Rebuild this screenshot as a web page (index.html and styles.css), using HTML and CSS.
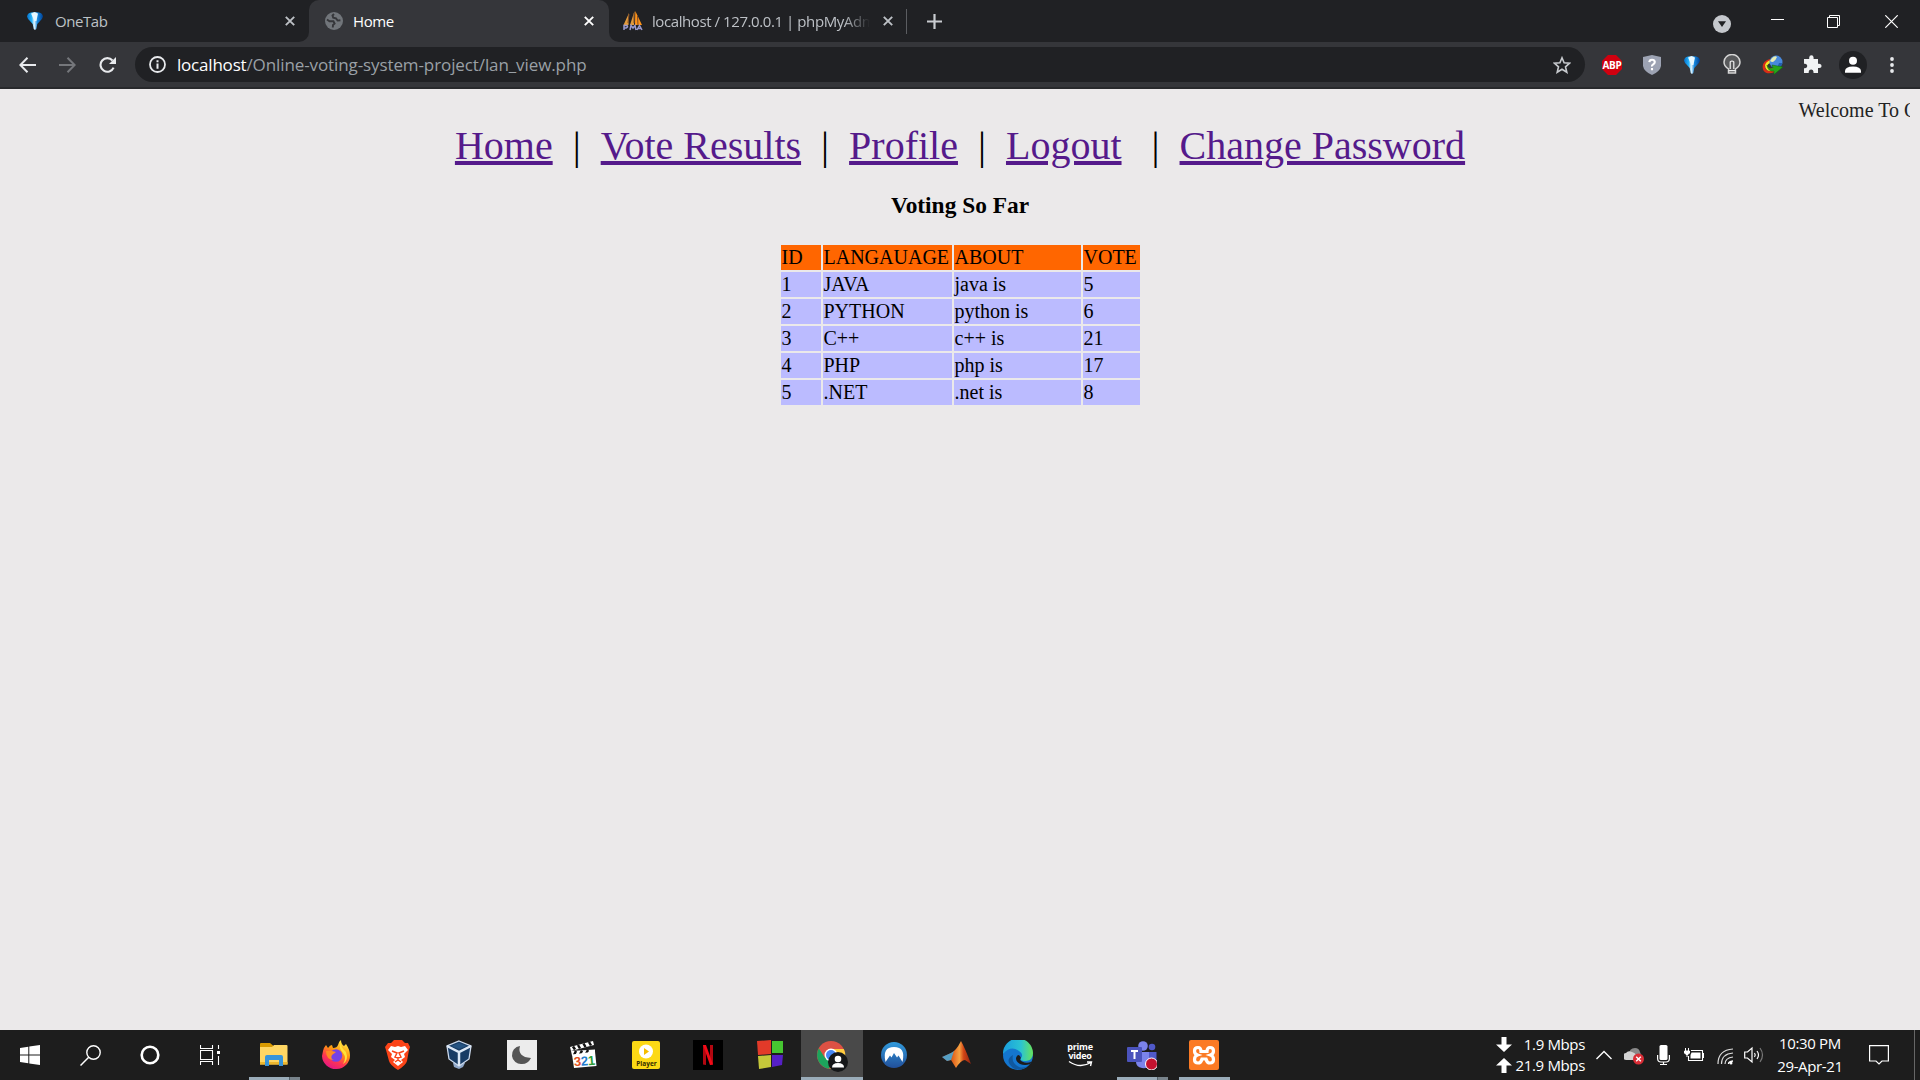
FILE: index.html
```html
<!DOCTYPE html>
<html lang="en">
<head>
<meta charset="utf-8">
<title>Home</title>
<link rel="stylesheet" href="styles.css">
</head>
<body>
<svg class="defs" width="0" height="0" aria-hidden="true">
  <defs>
    <linearGradient id="blue" x1="0" x2="1"><stop offset="0" stop-color="#056fc9"/><stop offset=".3" stop-color="#27b4fa"/><stop offset=".45" stop-color="#e8f8ff"/><stop offset=".65" stop-color="#1689df"/><stop offset="1" stop-color="#003e91"/></linearGradient>
    <linearGradient id="fox" x1="0.8" y1="0" x2="0.3" y2="1"><stop offset="0" stop-color="#fff44f"/><stop offset=".4" stop-color="#ff980e"/><stop offset=".7" stop-color="#ff3750"/><stop offset="1" stop-color="#e31587"/></linearGradient>
    <linearGradient id="edge" x1="0" x2="1"><stop offset="0" stop-color="#199ddf"/><stop offset=".6" stop-color="#2bc3d2"/><stop offset="1" stop-color="#67e35b"/></linearGradient>
    <linearGradient id="nord" x1="0" y1="0" x2="0" y2="1"><stop offset="0" stop-color="#329bdc"/><stop offset="1" stop-color="#214f9a"/></linearGradient>
    <linearGradient id="matlab" x1="0" x2="1"><stop offset="0" stop-color="#6b1612"/><stop offset=".4" stop-color="#e56a20"/><stop offset=".6" stop-color="#f5a142"/><stop offset=".75" stop-color="#d04415"/><stop offset="1" stop-color="#8c2412"/></linearGradient>
    <symbol id="onetab" viewBox="0 0 16 18"><path d="M0 4.5 Q.5 1 4 .4 Q8 -.3 12 .4 Q15.5 1 16 4.5 Q15.6 6.5 13.5 8.5 L10.3 12 L9.3 17 L8 18 L6.7 17 L5.7 12 L2.5 8.5 Q.4 6.5 0 4.5Z" fill="url(#blue)"/><path d="M4 1.5 Q8 .2 11 1.6 L9.4 9 L7.4 9Z" fill="#e8f8ff"/></symbol>
    <symbol id="close" viewBox="0 0 10 10"><path d="M.8.8 9.2 9.2M9.2.8.8 9.2" fill="none" stroke="currentColor" stroke-width="1.9"/></symbol>
  </defs>
</svg>

<header class="tabstrip">
  <div class="tab tab-first">
    <svg class="favicon onetab"><use href="#onetab"/></svg>
    <span class="tab-title title-one">OneTab</span>
    <svg class="tab-close"><use href="#close"/></svg>
  </div>
  <div class="tab tab-active">
    <svg class="favicon globe" viewBox="0 0 18 18"><circle cx="9" cy="9" r="9" fill="#71757a"/><path d="M2 7.5 4.5 9.2 8.4 9.3 9.6 11.6 8 13 7.8 15.5M9 2 7.5 3.6 8.2 5.6 11 6.4 12.6 8.6 15.4 8.2" fill="none" stroke="#35363a" stroke-width="1.9"/></svg>
    <span class="tab-title title-home">Home</span>
    <svg class="tab-close"><use href="#close"/></svg>
  </div>
  <div class="tab tab-last">
    <svg class="favicon pma" viewBox="0 0 20 20"><path d="M.5 14 6 2 5.5 14M7 14 11.5 0 11 14" fill="#e29a3b"/><path d="M12 14 12.3 0 19 14Z" fill="#ff9216"/><path d="M5 12 6 3M11 12V2M15 14 14.5 5" stroke="#7b4a28" stroke-width="1"/><path d="M1 19V14.5H4Q5.5 16 3 17H1M7 19 8 14.5 10 17 12 14.5 13 19M14 19 16.5 14.5 19 19M15 17.5H18" stroke="#9999cc" stroke-width="1.5" fill="none"/></svg>
    <span class="tab-title title-pma">localhost / 127.0.0.1 | phpMyAdmin</span>
    <svg class="tab-close"><use href="#close"/></svg>
  </div>
  <span class="tab-divider"></span>
  <svg class="new-tab" viewBox="0 0 15 15"><path d="M7.5 0V15M0 7.5H15" stroke="#c9ccd0" stroke-width="2.2"/></svg>
  <div class="window-controls">
    <svg class="search-tabs" viewBox="0 0 18 18"><circle cx="9" cy="9" r="9" fill="#c5c8cd"/><path d="M5 6.3H13L9 12Z" fill="#202124"/></svg>
    <svg class="win win-min" viewBox="0 0 13 13"><path d="M0 5.5H13" stroke="#fff"/></svg>
    <svg class="win" viewBox="0 0 13 13"><path d="M.5 2.5H10.5V12.5H.5ZM2.5 2.5V.5H12.5V10.5H10.5" fill="none" stroke="#fff"/></svg>
    <svg class="win" viewBox="0 0 13 13"><path d="M.3.3 12.7 12.7M12.7.3.3 12.7" stroke="#fff" stroke-width="1.2"/></svg>
  </div>
</header>

<div class="toolbar">
  <div class="nav-buttons">
    <svg viewBox="0 0 17 16"><path d="M17 8H1.5M8.5.8 1.3 8 8.5 15.2" fill="none" stroke="#e8eaed" stroke-width="2"/></svg>
    <svg viewBox="0 0 17 16"><path d="M0 8H15.5M8.5.8 15.7 8 8.5 15.2" fill="none" stroke="#75777b" stroke-width="2"/></svg>
    <svg viewBox="0 0 17 16"><path d="M14.6 10.6A6.8 6.8 0 1 1 13.5 3.5" fill="none" stroke="#e8eaed" stroke-width="2.1"/><path d="M17 0V7H10Z" fill="#e8eaed"/></svg>
  </div>
  <div class="omnibox">
    <svg class="info" viewBox="0 0 17 17"><circle cx="8.5" cy="8.5" r="7.5" fill="none" stroke="#e8eaed" stroke-width="1.8"/><path d="M8.5 7.5V12.8M8.5 4.2V6.2" stroke="#e8eaed" stroke-width="2"/></svg>
    <span class="url"><span class="host">localhost</span>/Online-voting-system-project/lan_view.php</span>
    <svg class="star" viewBox="0 0 18 18"><path d="M9 1.8 11.1 6.7 16.6 7.2 12.5 10.8 13.8 16.2 9 13.3 4.2 16.2 5.5 10.8 1.4 7.2 6.9 6.7Z" fill="none" stroke="#c7cace" stroke-width="1.6"/></svg>
  </div>
  <div class="extensions">
    <span class="ext"><svg width="20" height="20" viewBox="0 0 20 20"><path d="M6 0H14L20 6V14L14 20H6L0 14V6Z" fill="#d1000f"/><text x="10" y="13.7" class="abp">ABP</text></svg></span>
    <span class="ext"><svg width="18" height="20" viewBox="0 0 18 20"><path d="M9 0 18 2V11Q17 16.5 9 20 1 16.5 0 11V2Z" fill="#9da3b3"/><path d="M6.3 7.2Q6.5 4.7 9 4.7T11.8 7Q11.8 8.3 10.2 9.3T9 11.5M9 13V15.2" fill="none" stroke="#fff" stroke-width="2.1"/></svg></span>
    <span class="ext"><svg width="16" height="18"><use href="#onetab"/></svg></span>
    <span class="ext"><svg width="18" height="21" viewBox="0 0 18 21"><path d="M5.5 14.8Q1 12.5 1 8A8 7.5 0 0 1 17 8Q17 12.5 12.5 14.8V19H5.5Z" fill="#58595b" stroke="#d5d5d5" stroke-width="1.5"/><path d="M7.2 15V8Q9 6 10.8 8V15M5.5 16.7H12.5" fill="none" stroke="#eee" stroke-width="1.2"/></svg></span>
    <span class="ext"><svg width="21" height="20" viewBox="0 0 21 20"><path d="M9 5Q1 7 2 13T12 16" fill="none" stroke="#da2d16" stroke-width="2.5"/><path d="M10 6Q3 8 4.5 12T12 14" fill="none" stroke="#f4e829" stroke-width="2.5"/><circle cx="14" cy="7" r="6.5" fill="#4889dd"/><path d="M10 3Q13 0 15 2 14 5 11 7 9 7 8 6Z" fill="#e5edb5"/><path d="M17 8 20.5 8Q19 13 15 13.5Z" fill="#2461ae"/><path d="M5 10Q7 15 11 13L10 10 21 12 12 19.5 12 16Q6 17 5 10Z" fill="#27a51a" stroke="#12650f" stroke-width=".5"/></svg></span>
    <span class="ext"><svg width="19" height="19" viewBox="0 0 19 19"><path d="M1 4H6.2V2.6Q6.4.3 8.4.3T10.6 2.6V4H15V8.8H16.3Q18.6 9 18.6 11T16.3 13.1H15V18H10.5V16.8Q10.2 14.6 8.1 14.6T5.7 16.8V18H1V13.2H2.1Q4.3 13 4.3 11T2.1 8.8H1Z" fill="#f1f3f4"/></svg></span>
    <span class="ext"><svg width="28" height="28" viewBox="0 0 28 28"><circle cx="14" cy="14" r="14" fill="#202124"/><circle cx="14" cy="9.8" r="4" fill="#fff"/><path d="M6 21.8V20Q6.3 15.5 14 15.5T22 20V21.8Z" fill="#fff"/></svg></span>
    <span class="ext"><svg width="4" height="16" viewBox="0 0 4 16"><circle cx="2" cy="2" r="1.9" fill="#e8eaed"/><circle cx="2" cy="8" r="1.9" fill="#e8eaed"/><circle cx="2" cy="14" r="1.9" fill="#e8eaed"/></svg></span>
  </div>
</div>

<main class="page">
  <div class="marquee"><span>Welcome To Online Voting</span></div>
  <nav class="links"><a href="#">Home</a>&nbsp; | &nbsp;<a href="#">Vote Results</a>&nbsp; | &nbsp;<a href="#">Profile</a>&nbsp; | &nbsp;<a href="#">Logout</a>&nbsp;&nbsp; | &nbsp;<a href="#">Change Password</a></nav>
  <h3>Voting So Far</h3>
  <table class="votes">
    <colgroup><col class="c-id"><col class="c-lang"><col class="c-about"><col class="c-vote"></colgroup>
    <tr class="head"><td>ID</td><td>LANGAUAGE</td><td>ABOUT</td><td>VOTE</td></tr>
    <tr><td>1</td><td>JAVA</td><td>java is</td><td>5</td></tr>
    <tr><td>2</td><td>PYTHON</td><td>python is</td><td>6</td></tr>
    <tr><td>3</td><td>C++</td><td>c++ is</td><td>21</td></tr>
    <tr><td>4</td><td>PHP</td><td>php is</td><td>17</td></tr>
    <tr><td>5</td><td>.NET</td><td>.net is</td><td>8</td></tr>
  </table>
</main>

<footer class="taskbar">
  <div class="system">
    <span class="slot"><svg width="20" height="20" viewBox="0 0 20 20"><path d="M0 3 8.3 1.8V9.4H0ZM9.3 1.6 20 0V9.4H9.3ZM0 10.4H8.3V18.2L0 17ZM9.3 10.4H20V20L9.3 18.4Z" fill="#fff"/></svg></span>
    <span class="slot"><svg width="21" height="21" viewBox="0 0 21 21"><circle cx="13.5" cy="7.5" r="6.7" fill="none" stroke="#fff" stroke-width="1.4"/><path d="M8.7 12.3.5 20.5" stroke="#fff" stroke-width="1.5"/></svg></span>
    <span class="slot"><svg width="20" height="20" viewBox="0 0 20 20"><circle cx="10" cy="10" r="8.3" fill="none" stroke="#fff" stroke-width="2.6"/></svg></span>
    <span class="slot"><svg width="20" height="20" viewBox="0 0 20 20"><path d="M.5 0V3.5H12.5V0M.5 5.5H12.5V14.5H.5ZM.5 20V16.5H12.5V20M18.5 0V4M18.5 11V20" fill="none" stroke="#fff" stroke-width="1.1"/><path d="M17 6H20V9H17Z" fill="#fff"/></svg></span>
  </div>
  <div class="apps">
    <span class="app grouped"><svg viewBox="0 0 30 30"><path d="M1 5V3.5Q1 3 2 3H11L14 5.5V9H1Z" fill="#d99a00"/><path d="M1 7H13L15 5H27.5Q28.5 5 28.5 6V24.5H1Z" fill="#ffd663"/><path d="M1 22H28.5V24.5H1Z" fill="#edb62d"/><path d="M6 26V17Q6 15 8 15H22Q24 15 24 17V26H20V20H10V26Z" fill="#3794da"/></svg></span>
    <span class="app"><svg viewBox="0 0 30 30"><path d="M2 11Q3 7 5 5L7 8Q9 5 11 5L12 8Q16 8 17 5 18 1 20 0 20 4 23 6L25 4Q29 10 29 15A14 13.5 0 0 1 1 16Z" fill="url(#fox)"/><circle cx="15" cy="15.5" r="6.3" fill="#7542e5"/><path d="M5 11 11 11 15 12 11 15Q9 19 13 20 5 20 5 11Z" fill="#ff8b23"/><path d="M20 1Q19 7 25 12 28 20 22 24 26 18 22 13 17 8 20 1Z" fill="#ffe13a"/></svg></span>
    <span class="app"><svg viewBox="0 0 30 30"><path d="M8 3 11 0H19L22 3 25 3 27 7 26 10 24 21Q23 25 15 30 7 25 6 21L3 10 2 7 5 3Z" fill="#fb4418"/><path d="M8 6 12 7 15 6 18 7 22 6 25 10 21 14 22 17 18 20 20 22 15 26 10 22 12 20 8 17 9 14 5 10Z" fill="#fff"/><path d="M9 11 14 13 12 17 15 18 18 17 16 13 21 11M15 18V21M12 22 15 20 18 22" fill="none" stroke="#fb4418" stroke-width="1.5"/></svg></span>
    <span class="app vbox"><svg viewBox="0 0 30 30"><path d="M9 23H21L19 27 15 29 10 27Z" fill="#91a9ca"/><path d="M15 1 27 6 25 19 15 26 5 19 3 6Z" fill="#183c65" stroke="#cddbee" stroke-width="1.3"/><path d="M3 6 15 12 27 6M15 12V26" fill="none" stroke="#dce8f6" stroke-width="2.5"/><path d="M15 3 23 6 15 9 7 6Z" fill="#255381"/></svg></span>
    <span class="app"><svg viewBox="0 0 30 30"><path d="M0 0H30V30H0Z" fill="#ececec"/><path d="M13 6Q10 17 24 18 21 24 15 24A9 9 0 0 1 13 6Z" fill="#555"/></svg></span>
    <span class="app"><svg viewBox="0 0 30 30"><path d="M1 7 24 1 25 5 2 11Z" fill="#fff"/><path d="M2 11 26 9.5V13L3 15.5Z" fill="#fff"/><path d="M4 6.5 6 9.5M9 5 11 8.5M14.5 3.5 16.5 7M20 2 22 5.5M5 15 7 11M11 14.5 13 10.5M17 14 19 10" stroke="#111" stroke-width="2.5"/><path d="M3 14.5 26 11.5 27.5 26 5 28Z" fill="#fff"/><text x="5" y="25.5" class="n321" transform="rotate(-5 15 22)"><tspan fill="#e34f20">3</tspan><tspan fill="#247dce">2</tspan><tspan fill="#2d9d38">1</tspan></text></svg></span>
    <span class="app"><svg viewBox="0 0 30 30"><rect x="1" y="1" width="28" height="28" rx="2" fill="#fcd915"/><circle cx="15" cy="11.5" r="7" fill="#fff"/><path d="M13 8 18 11.5 13 15Z" fill="#f5bd00"/><text x="15.5" y="25.5" class="player">Player</text></svg></span>
    <span class="app"><svg viewBox="0 0 30 30"><path d="M0 0H30V30H0Z" fill="#000"/><path d="M10 5H13V25L10 24.5ZM17 5H20V24.5L17 25Z" fill="#b20710"/><path d="M10 5H13L20 24.5 17 25Z" fill="#f20b18"/></svg></span>
    <span class="app"><svg viewBox="0 0 30 30"><path d="M2 1 16 0V14L3 15Z" fill="#e23a29"/><path d="M17 1H28V13H17Z" fill="#46c631"/><path d="M3 16 16 15V27L4 29Z" fill="#c5c83a"/><path d="M17 15H28L27 25 17 27Z" fill="#5620c6"/></svg></span>
    <span class="app active"><svg viewBox="0 0 34 34"><circle cx="15" cy="17" r="14" fill="#dd5144"/><path d="M2.8 10.2A14 14 0 0 0 13 30.8L18 20H9Z" fill="#1ca45c"/><path d="M15 11H27.8A14 14 0 0 1 14 31L20 20Z" fill="#ffcd40"/><circle cx="15" cy="17" r="6.5" fill="#fff"/><circle cx="15" cy="17" r="5" fill="#4687f4"/><circle cx="22" cy="24" r="10" fill="#151719"/><circle cx="22" cy="21" r="3.3" fill="#fff"/><path d="M16 29.5Q16 25 22 25T28 29.5Z" fill="#fff"/></svg></span>
    <span class="app"><svg viewBox="0 0 30 30"><circle cx="15" cy="15" r="13" fill="url(#nord)"/><path d="M6.5 22Q3 7 15 7T23.5 22L19.5 15.5 18 17.5 15 13 12.5 17.5 11 15.5Z" fill="#fff"/></svg></span>
    <span class="app"><svg viewBox="0 0 30 30"><path d="M1 17 10 13Q15 11 20 1 24 8 30 24L24 20Q20 20 15 28L10 20 6 21Z" fill="url(#matlab)"/><path d="M1 17 10 13 13 11 10 20 6 21Z" fill="#559fc3"/></svg></span>
    <span class="app"><svg viewBox="0 0 30 30"><circle cx="15" cy="15" r="15" fill="#1476cf"/><path d="M0 14A15 15 0 0 1 30 13Q30 20 23 21 16 21 18 18 21 14 16 11 8 5 0 14Z" fill="url(#edge)"/><path d="M10 15Q8 23 16 27 22 29 27 24 18 33 10 28 1 20 10 15Z" fill="#10589f"/><path d="M18 18Q16 20 19 21.5 24 24 28.5 21.5L27 24Q22 26 17 24 11 20 14 16 16 13 18 18Z" fill="#1c1c1c"/></svg></span>
    <span class="app"><svg viewBox="0 0 30 30"><text x="15" y="9.5" class="prime">prime</text><text x="15" y="19" class="prime">video</text><path d="M4 21.5Q15 29 26 22.5M22 22H26.5L25.5 26" fill="none" stroke="#fff" stroke-width="1.4"/></svg></span>
    <span class="app grouped"><svg viewBox="0 0 30 30"><circle cx="16" cy="6" r="4.8" fill="#7b83eb"/><circle cx="25" cy="7" r="3.3" fill="#5059c9"/><path d="M9 12H23V24Q21 29 15 28T9 22Z" fill="#7b83eb"/><path d="M22 12H29.5V21Q27 25 22 24Z" fill="#5059c9"/><rect y="7" width="15" height="15" rx="1" fill="#4b53bc"/><path d="M4 11H11M7.5 11V19" stroke="#fff" stroke-width="2"/><circle cx="24.5" cy="24" r="6" fill="#c4122f" stroke="#fff"/></svg></span>
    <span class="app running"><svg viewBox="0 0 30 30"><rect width="30" height="30" rx="2" fill="#fb7a24"/><path d="M9 7.5Q5.5 7.5 5.5 11 5.5 14 8.5 15 5.5 16 5.5 19.5 5.5 23 9 23 12 23 13 19H17Q18 23 21 23 24.5 23 24.5 19.5 24.5 16 21.5 15 24.5 14 24.5 11 24.5 7.5 21 7.5 18 7.5 18 11.5H12Q12 7.5 9 7.5Z" fill="none" stroke="#fff" stroke-width="3.2"/></svg></span>
  </div>
  <div class="tray">
    <div class="net">
      <div class="rate"><svg viewBox="0 0 16 16"><path d="M5.5 0H10.5V7.5H16L8 15 0 7.5H5.5Z" fill="#fff"/></svg><span>1.9 Mbps</span></div>
      <div class="rate"><svg viewBox="0 0 16 16"><path d="M5.5 15H10.5V7.5H16L8 0 0 7.5H5.5Z" fill="#fff"/></svg><span>21.9 Mbps</span></div>
    </div>
    <svg class="chevron" viewBox="0 0 16 10"><path d="M.5 9 8 1.5 15.5 9" fill="none" stroke="#fff" stroke-width="1.4"/></svg>
    <svg class="cloud" viewBox="0 0 20 18"><path d="M5 8Q5 1 11 1 15 1 16 5L18 10 8 12Z" fill="#898989"/><path d="M3 13A3.5 3.5 0 0 1 2 6Q4 3 8 5 12 6 12 9L10 13Z" fill="#d3d3d3"/><circle cx="14.5" cy="12" r="5.5" fill="#d92d36"/><path d="M12.2 9.7 16.8 14.3M16.8 9.7 12.2 14.3" stroke="#fff" stroke-width="1.4"/></svg>
    <svg class="mic" viewBox="0 0 13 20"><rect x="2.5" width="8" height="15" rx="1.5" fill="#fff"/><path d="M.6 10V13.5Q.6 17 4 17H9Q12.4 17 12.4 13.5V10M6.5 17V20M3 19.5H10" fill="none" stroke="#fff" stroke-width="1.2"/></svg>
    <svg class="battery" viewBox="0 0 20 14"><path d="M7 2.5H18.5V12.5H4.5V8M18.5 5.5H19.5V9.5H18.5" fill="none" stroke="#fff" stroke-width="1.1"/><path d="M7.5 4.5H16.5V10.5H6.5V7Z" fill="#fff"/><path d="M1.5 0V3M4.5 0V3M.5 3H5.5V5L4 6.5H2L.5 5ZM3 7V9" fill="#fff" stroke="#fff"/></svg>
    <svg class="wifi" viewBox="0 0 17 17"><path d="M1 16Q1 2 16 1M4.5 16Q4.5 6 16 5M8 16Q8 10 16 9" fill="none" stroke="#ddd" stroke-width="1.2"/><path d="M11.5 16Q11.5 13.5 16 13" fill="none" stroke="#fff" stroke-width="1.4"/><circle cx="14" cy="15" r="1.5" fill="#fff"/></svg>
    <svg class="volume" viewBox="0 0 21 18"><path d="M.7 6H3.5L8 2V16L3.5 12H.7Z" fill="none" stroke="#fff" stroke-width="1.2"/><path d="M10.5 7Q12 9 10.5 11M13 5Q16 9 13 13" fill="none" stroke="#fff" stroke-width="1.2"/><path d="M16 2Q21 9 16 16" fill="none" stroke="#777" stroke-width="1.2"/></svg>
    <div class="clock"><span>10:30 PM</span><span>29-Apr-21</span></div>
    <svg class="notice" viewBox="0 0 20 20"><path d="M.6.6H19.4V16H13L10 19 7 16H.6Z" fill="none" stroke="#fff" stroke-width="1.2"/></svg>
    <span class="show-desktop"></span>
  </div>
</footer>
</body>
</html>
```
FILE: styles.css
```css
* { box-sizing: border-box; }
html, body { height: 100%; }
body {
  margin: 0;
  display: flex;
  flex-direction: column;
  overflow: hidden;
  background: #ebe9ea;
  font-family: "Open Sans", "Noto Sans", sans-serif;
}
svg { display: block; flex: none; }
.defs { position: absolute; }

/* Tab strip */
.tabstrip {
  height: 42px;
  flex: none;
  display: flex;
  align-items: center;
  background: linear-gradient(#35363a, #35363a) 295px 32px / 330px 10px no-repeat #202124;
}
.tab { height: 42px; display: flex; align-items: center; color: #bdc1c6; font-size: 15px; }
.tab-first { width: 309px; padding: 0 14px 0 27px; border-radius: 0 0 10px 0; background: #202124; }
.tab-active { width: 300px; padding: 0 15px 0 16px; border-radius: 10px 10px 0 0; background: #35363a; color: #fff; }
.tab-last { width: 297px; padding: 0 13px 0 14px; border-radius: 0 0 0 10px; background: #202124; }
.tab-close { width: 10px; height: 10px; margin-left: auto; }
.tab-title { white-space: nowrap; letter-spacing: -.42px; margin-top: -1px; }
.onetab { width: 16px; height: 18px; margin-right: 12px; }
.globe { width: 18px; height: 18px; margin-right: 10px; }
.pma { width: 20px; height: 20px; margin-right: 9px; }
.title-pma {
  width: 218px;
  overflow: hidden;
  -webkit-mask-image: linear-gradient(90deg, #000 88%, transparent);
  mask-image: linear-gradient(90deg, #000 88%, transparent);
}
.tab-divider { width: 1px; height: 25px; background: #5b5d61; }
.new-tab { width: 15px; height: 15px; margin-left: 20px; }
.window-controls { height: 37px; margin-left: auto; display: flex; align-items: center; padding-right: 22px; }
.search-tabs { width: 18px; height: 18px; margin: 5px 40px 0 0; }
.win { width: 13px; height: 13px; }
.win-min { margin-top: -2px; }
.win + .win { margin-left: 43px; }
.win:last-child { margin-left: 45px; }

/* Address bar */
.toolbar {
  height: 47px;
  flex: none;
  display: flex;
  align-items: center;
  background: #35363a;
  border-bottom: 2px solid #28292c;
}
.nav-buttons { width: 135px; flex: none; padding-left: 19px; display: flex; gap: 23px; }
.nav-buttons svg { width: 17px; height: 16px; }
.omnibox {
  width: 1450px;
  height: 35px;
  flex: none;
  display: flex;
  align-items: center;
  padding: 0 14px;
  border-radius: 18px;
  background: #202124;
}
.info { width: 17px; height: 17px; }
.url { margin-left: 11px; color: #9aa0a6; font-size: 17px; letter-spacing: -.1px; white-space: nowrap; }
.host { color: #fff; letter-spacing: -.2px; }
.star { width: 18px; height: 18px; margin-left: auto; }
.extensions { display: flex; align-items: center; margin-left: 7px; }
.ext { width: 40px; flex: none; display: flex; align-items: center; justify-content: center; }
.ext:nth-child(7) { width: 41px; }
.ext:nth-child(8) { width: 37px; }
.abp { font: bold 10px "Open Sans", sans-serif; text-anchor: middle; letter-spacing: -.3px; fill: #fff; }

/* Page content */
.page { flex: 1; padding: 10px; font: 20px "Liberation Serif", serif; color: #000; }
.marquee { height: 23px; line-height: 23px; padding-left: 1788.5px; overflow: hidden; white-space: nowrap; color: #222; }
.links { height: 46px; line-height: 46px; margin-top: 1px; font-size: 40px; text-align: center; white-space: nowrap; }
.links a { color: #551a8b; text-decoration-thickness: 4px; text-underline-offset: 2px; }
h3 { margin: 23px 0 0; height: 27px; line-height: 27px; font-size: 23.4px; text-align: center; }
.votes { width: 363px; margin: 24px auto 0; border-spacing: 2px; table-layout: fixed; }
.votes td { height: 25px; padding: 1px; line-height: 23px; background: #bbbbff; }
.votes .head td { background: #ff6600; }
.c-id { width: 40px; }
.c-lang { width: 129px; }
.c-about { width: 127px; }
.c-vote { width: 57px; }

/* Taskbar */
.taskbar { height: 50px; flex: none; display: flex; background: #1d1d1d; color: #fff; }
.system { display: flex; width: 243px; }
.slot { width: 60px; display: flex; align-items: center; justify-content: center; }
.apps { display: flex; }
.app { width: 62px; height: 50px; display: flex; align-items: center; justify-content: center; }
.app svg { width: 30px; height: 30px; }
.vbox { padding-right: 3px; }
.app.active { background: linear-gradient(#9aacb9, #9aacb9) bottom / 100% 3px no-repeat #494949; }
.active svg { width: 34px; height: 34px; margin-left: 2px; }
.running { background: linear-gradient(#9aacb9, #9aacb9) 6px 100% / 51px 3px no-repeat; }
.grouped { background: linear-gradient(90deg, #9aacb9 40px, #53616b 40px, #53616b 41px, #78838b 41px) 6px 100% / 51px 3px no-repeat; }
.n321 { font: bold 13px "Liberation Sans", sans-serif; letter-spacing: -.2px; }
.player { font: bold 6.5px "Open Sans", sans-serif; text-anchor: middle; fill: #342d00; }
.prime { font: bold 9px "Open Sans", sans-serif; text-anchor: middle; fill: #fff; letter-spacing: -.25px; }
.tray { display: flex; align-items: center; margin-left: auto; font-size: 15px; letter-spacing: -.35px; }
.net { width: 89px; }
.rate { display: flex; align-items: center; justify-content: space-between; height: 21px; line-height: 21px; }
.rate svg { width: 16px; height: 16px; }
.chevron { width: 16px; height: 10px; margin-left: 11px; }
.cloud { width: 20px; height: 18px; margin: 2px 0 0 12px; }
.mic { width: 13px; height: 20px; margin-left: 13px; }
.battery { width: 20px; height: 14px; margin-left: 14px; }
.wifi { width: 17px; height: 17px; margin: 2px 0 0 13px; }
.volume { width: 21px; height: 18px; margin-left: 10px; }
.clock { width: 70px; margin-left: 10px; display: flex; flex-direction: column; text-align: center; line-height: 23px; }
.notice { width: 20px; height: 20px; margin-left: 24px; }
.show-desktop { width: 6px; height: 50px; margin-left: 25px; border-left: 1px solid #666; }
```
